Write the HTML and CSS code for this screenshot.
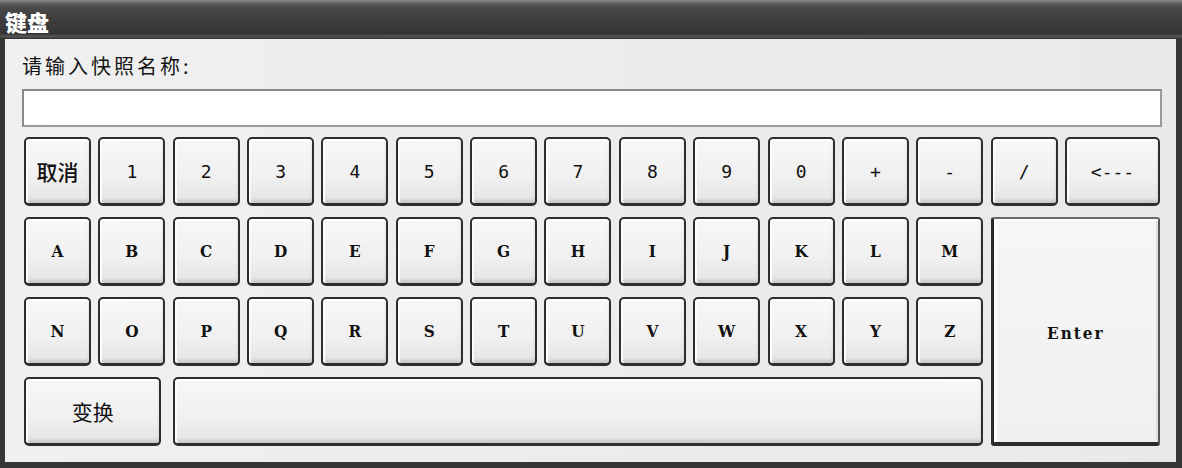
FILE: index.html
```html
<!DOCTYPE html>
<html lang="zh">
<head>
<meta charset="utf-8">
<title>键盘</title>
<link rel="stylesheet" href="styles.css">
</head>
<body>
<div class="window">
  <div class="titlebar">键盘</div>
  <div class="content">
    <div class="prompt">请输入快照名称:</div>
    <div class="input"></div>
    <div class="keys">
      <div class="key cjk">取消</div>
      <div class="key num">1</div>
      <div class="key num">2</div>
      <div class="key num">3</div>
      <div class="key num">4</div>
      <div class="key num">5</div>
      <div class="key num">6</div>
      <div class="key num">7</div>
      <div class="key num">8</div>
      <div class="key num">9</div>
      <div class="key num">0</div>
      <div class="key num">+</div>
      <div class="key num">-</div>
      <div class="key num">/</div>
      <div class="key num">&lt;---</div>

      <div class="key let">A</div>
      <div class="key let">B</div>
      <div class="key let">C</div>
      <div class="key let">D</div>
      <div class="key let">E</div>
      <div class="key let">F</div>
      <div class="key let">G</div>
      <div class="key let">H</div>
      <div class="key let">I</div>
      <div class="key let">J</div>
      <div class="key let">K</div>
      <div class="key let">L</div>
      <div class="key let">M</div>
      <div class="key let enter">Enter</div>

      <div class="key let">N</div>
      <div class="key let">O</div>
      <div class="key let">P</div>
      <div class="key let">Q</div>
      <div class="key let">R</div>
      <div class="key let">S</div>
      <div class="key let">T</div>
      <div class="key let">U</div>
      <div class="key let">V</div>
      <div class="key let">W</div>
      <div class="key let">X</div>
      <div class="key let">Y</div>
      <div class="key let">Z</div>

      <div class="key cjk switch">变换</div>
      <div class="key space"></div>
    </div>
  </div>
</div>
</body>
</html>
```

FILE: styles.css
```css
html, body {
  margin: 0;
  padding: 0;
  background: #3a3a3a;
}

.window {
  width: 1182px;
  height: 468px;
  display: flex;
  flex-direction: column;
  background: #363636;
}

.titlebar {
  height: 39px;
  box-sizing: border-box;
  padding: 7px 0 0 5px;
  background: linear-gradient(#8a8a8a 0, #626262 3px, #4a4a4a 7px, #3e3e3e 50%, #353535 86%, #555 94%, #2e2e2e 100%);
  color: #fff;
  font-family: "Noto Sans CJK SC", sans-serif;
  font-weight: 900;
  font-size: 22px;
  line-height: 28px;
}

.content {
  flex: 1;
  margin: 0 6px 6px 5px;
  background: linear-gradient(90deg, #f0f0f0, #ececec 50%, #e9e9e9);
  padding: 11px 14px 0 17px;
  display: flex;
  flex-direction: column;
}

.prompt {
  font-family: "Noto Sans CJK SC", sans-serif;
  font-size: 20px;
  letter-spacing: 3px;
  line-height: 31px;
  color: #151515;
  height: 39px;
}

.input {
  height: 34px;
  width: 1136px;
  background: #fff;
  border: 2px solid #8a8a8a;
  border-right-color: #9a9a9a;
  border-bottom-color: #9a9a9a;
}

.keys {
  margin: 10px 0 0 2px;
  width: 1136px;
  display: grid;
  grid-template-columns: repeat(14, 1fr) 95px;
  grid-template-rows: repeat(4, 69px);
  column-gap: 7.4px;
  row-gap: 11px;
}

.key {
  box-sizing: border-box;
  border: 2px solid #2e2e2e;
  border-bottom-width: 3px;
  border-radius: 5px;
  background: linear-gradient(#f8f8f8, #f0f0f0 60%, #e4e4e4);
  box-shadow: inset 0 2px 0 #fff, inset 2px 0 0 #fcfcfc, inset 0 -3px 3px rgba(0,0,0,0.12);
  display: flex;
  align-items: center;
  justify-content: center;
  color: #111;
}

.cjk {
  font-family: "Noto Sans CJK SC", sans-serif;
  font-size: 21px;
  font-weight: 500;
}

.num {
  font-family: "DejaVu Sans Mono", monospace;
  font-size: 18px;
}

.let {
  font-family: "DejaVu Serif", serif;
  font-stretch: condensed;
  font-weight: bold;
  font-size: 17px;
}

.enter {
  grid-column: 14 / 16;
  grid-row: 2 / 5;
  align-items: flex-start;
  padding-top: 104px;
  letter-spacing: 2px;
  border-radius: 3px;
  border-width: 2px 2px 4px 3px;
  border-color: #6a6a6a #555 #2a2a2a #2a2a2a;
  background: linear-gradient(#f6f6f6, #f0f0f0);
  box-shadow: inset 3px 0 0 #fff, inset 0 2px 0 #fff, inset -2px 0 0 #e0e0e0;
}

.switch {
  grid-column: 1 / 3;
  margin-right: 4px;
  font-weight: 400;
}

.space {
  grid-column: 3 / 14;
}
```
